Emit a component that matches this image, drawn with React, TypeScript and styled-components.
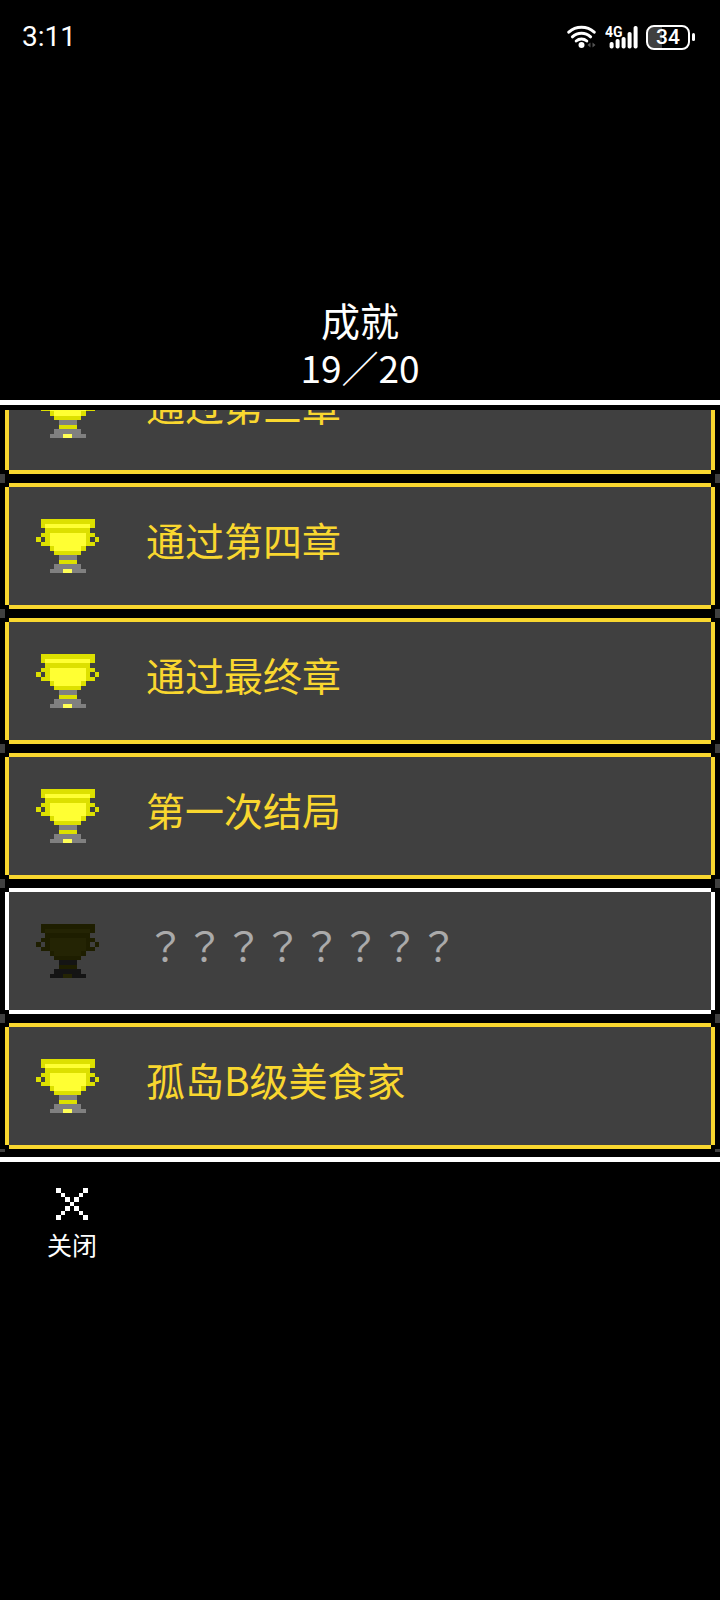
import React, { useLayoutEffect, useRef } from "react";
import styled, { createGlobalStyle } from "styled-components";

const GlobalStyle = createGlobalStyle`
  *, *::before, *::after { box-sizing: border-box; }
  body {
    margin: 0;
    background: #000;
    color: #fff;
    font-family: "Noto Sans CJK SC", sans-serif;
  }
`;

const gold = "#f9d72f";
const panel = "#404040";

const Screen = styled.div`
  display: flex;
  flex-direction: column;
  min-height: 100vh;
  background: #000;
`;

const StatusBar = styled.header`
  display: flex;
  align-items: center;
  justify-content: space-between;
  height: 74px;
  padding: 0 25px 0 22px;
  font-family: Roboto, sans-serif;
`;

const Clock = styled.time`
  font-size: 28px;
  line-height: 36px;
`;

const StatusIcons = styled.div`
  display: flex;
  align-items: center;
  gap: 8px;
`;

const Battery = styled.div`
  display: flex;
  align-items: center;
  gap: 2px;
`;

const BatteryBody = styled.div`
  width: 44px;
  height: 25px;
  border: 2px solid #fff;
  border-radius: 8px;
  background: linear-gradient(to right, #404040 34%, #000 34%);
  font-size: 21px;
  font-weight: 500;
  line-height: 21px;
  text-align: center;
`;

const BatteryTip = styled.div`
  width: 3px;
  height: 8px;
  border-radius: 2px;
  background: #fff;
`;

const Heading = styled.section`
  padding: 221px 0 9px;
  text-align: center;
`;

const Title = styled.h1`
  margin: 0;
  font-size: 39px;
  font-weight: 400;
  line-height: 48px;
`;

const Count = styled.p`
  margin: 0;
  font-size: 37px;
  line-height: 48px;
`;

const ListPanel = styled.main`
  padding: 5px 0;
  border-top: 5px solid #fff;
  border-bottom: 5px solid #fff;
`;

const List = styled.ul`
  display: flex;
  flex-direction: column;
  gap: 9px;
  height: 742px;
  margin: 0;
  padding: 0 9px 3px;
  overflow-x: hidden;
  overflow-y: auto;
  scrollbar-width: none;
  list-style: none;
`;

const Row = styled.li<{ $color: string }>`
  position: relative;
  display: flex;
  flex: none;
  align-items: flex-start;
  gap: 47px;
  height: 126px;
  padding: 32px 27px;
  border: solid ${(p) => p.$color};
  border-width: 4px 0;
  background: ${panel};

  &::before {
    content: "";
    position: absolute;
    inset: 0 -4px;
    border: solid ${(p) => p.$color};
    border-width: 0 4px;
  }

  &::after {
    content: "";
    position: absolute;
    inset: auto -9px -13px;
    height: 9px;
    border: solid ${panel};
    border-width: 0 5px;
  }
`;

const RowLabel = styled.span<{ $locked?: boolean }>`
  color: ${(p) => (p.$locked ? "#aaa" : gold)};
  font-family: ${(p) => (p.$locked ? '"Noto Sans CJK JP"' : '"Noto Sans CJK SC"')}, sans-serif;
  font-size: 39px;
  line-height: 40px;
  white-space: nowrap;
`;

const CloseButton = styled.button`
  display: flex;
  flex-direction: column;
  align-items: center;
  align-self: flex-start;
  gap: 6px;
  margin: 26px 0 0 47px;
  padding: 0;
  border: 0;
  background: none;
  color: #fff;
  font-family: inherit;
  font-size: 25px;
  line-height: 36px;
  cursor: pointer;
`;

const trophyPixels = [
  ".dddddddddddd.",
  ".dbbbbbbbbbbd.",
  "..dddddddddd..",
  ".ddbbbbbbbbdd.",
  "d.dbbbbbbbbd.d",
  ".ddbbbbbbbbdd.",
  "...dbbbbbbd...",
  "....dddddd....",
  ".....gggg.....",
  ".....dddd.....",
  "....gggggg....",
  "...gggllggg...",
];

const wonPalette: Record<string, string> = { d: "#dde000", b: "#ffff33", g: "#808080", l: "#ffff55" };
const lockedPalette: Record<string, string> = { d: "#1e1e00", b: "#242404", g: "#141414", l: "#242404" };

function Trophy({ locked }: { locked?: boolean }) {
  const palette = locked ? lockedPalette : wonPalette;
  return (
    <svg width="63" height="54" viewBox="0 0 14 12" shapeRendering="crispEdges" aria-hidden="true">
      {trophyPixels.flatMap((line, y) =>
        [...line].map((c, x) =>
          c === "." ? null : <rect key={`${x}-${y}`} x={x} y={y} width="1" height="1" fill={palette[c]} />
        )
      )}
    </svg>
  );
}

function Cross() {
  return (
    <svg width="32" height="32" viewBox="0 0 7 7" shapeRendering="crispEdges" fill="#fff" aria-hidden="true">
      {[0, 1, 2, 3, 4, 5, 6].map((i) => (
        <React.Fragment key={i}>
          <rect x={i} y={i} width="1" height="1" />
          <rect x={6 - i} y={i} width="1" height="1" />
        </React.Fragment>
      ))}
    </svg>
  );
}

function Wifi() {
  return (
    <svg width="30" height="24" viewBox="0 0 30 24" fill="none" stroke="#fff" strokeWidth="3" strokeLinecap="round" aria-hidden="true">
      <path d="M1.8 7.2a19 19 0 0 1 25.4 0" />
      <path d="M5.4 11.8a13.5 13.5 0 0 1 18.2 0" />
      <path d="M9.2 16a8 8 0 0 1 10.6 0" />
      <circle cx="14.5" cy="20" r="3" fill="#fff" stroke="none" />
      <path d="M23.5 17.5v5l-3-2.5zM25.5 17.5v5l3-2.5z" fill="#555" stroke="none" />
    </svg>
  );
}

function Signal() {
  return (
    <svg width="33" height="24" viewBox="0 0 33 24" fill="#fff" aria-hidden="true">
      <text x="0" y="12" fontSize="14" fontWeight="700" fontFamily="Roboto, sans-serif">4G</text>
      <rect x="4.6" y="17" width="4" height="6.5" rx="1.8" />
      <rect x="10.6" y="14" width="4" height="9.5" rx="1.8" />
      <rect x="16.6" y="12" width="4" height="11.5" rx="1.8" />
      <rect x="22.6" y="7" width="4" height="16.5" rx="1.8" />
      <rect x="28.6" y="1" width="4" height="22.5" rx="1.8" />
    </svg>
  );
}

const initialScroll = 62;

const achievements = [
  { name: "通过第三章" },
  { name: "通过第四章" },
  { name: "通过最终章" },
  { name: "第一次结局" },
  { name: "？？？？？？？？", locked: true },
  { name: "孤岛B级美食家" },
];

export default function App() {
  const listRef = useRef<HTMLUListElement>(null);

  useLayoutEffect(() => {
    if (listRef.current) listRef.current.scrollTop = initialScroll;
  }, []);

  return (
    <Screen>
      <GlobalStyle />
      <StatusBar>
        <Clock>3:11</Clock>
        <StatusIcons>
          <Wifi />
          <Signal />
          <Battery>
            <BatteryBody>34</BatteryBody>
            <BatteryTip />
          </Battery>
        </StatusIcons>
      </StatusBar>
      <Heading>
        <Title>成就</Title>
        <Count>19／20</Count>
      </Heading>
      <ListPanel>
        <List ref={listRef}>
          {achievements.map((a) => (
            <Row key={a.name} $color={a.locked ? "#fff" : gold}>
              <Trophy locked={a.locked} />
              <RowLabel $locked={a.locked}>{a.name}</RowLabel>
            </Row>
          ))}
        </List>
      </ListPanel>
      <CloseButton type="button">
        <Cross />
        关闭
      </CloseButton>
    </Screen>
  );
}
